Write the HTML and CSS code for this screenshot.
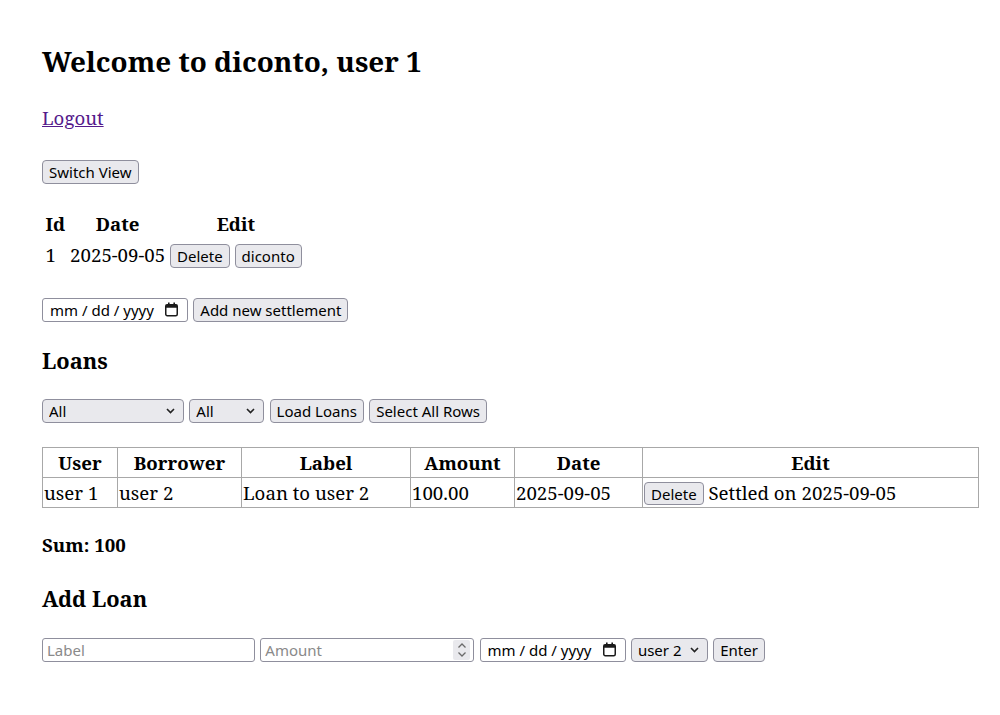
FILE: index.html
```html
<!DOCTYPE html>
<html>
<head>
<meta charset="utf-8">
<title>diconto</title>
<link rel="stylesheet" href="styles.css">
</head>
<body>
<div class="app">
  <h2 class="title">Welcome to diconto, user 1</h2>
  <p class="logout-line"><a href="#" class="logout">Logout</a></p>
  <div class="row switch-row"><button class="btn">Switch View</button></div>
  <table class="settlements">
    <thead><tr><th>Id</th><th>Date</th><th>Edit</th></tr></thead>
    <tbody><tr><td>1</td><td>2025-09-05</td><td><button class="btn">Delete</button> <button class="btn">diconto</button></td></tr></tbody>
  </table>
  <div class="row date-row">
    <span class="date-field"><span class="date-text">mm / dd / yyyy</span><svg class="cal" width="15" height="15" viewBox="0 0 15 15"><rect x="1.75" y="2.75" width="11.5" height="11" rx="1.5" fill="none" stroke="#1b1b1b" stroke-width="1.5"/><rect x="1.75" y="2.75" width="11.5" height="3" fill="#1b1b1b"/><rect x="4" y="0.5" width="1.6" height="3" fill="#1b1b1b"/><rect x="9.4" y="0.5" width="1.6" height="3" fill="#1b1b1b"/></svg></span>
    <button class="btn">Add new settlement</button>
  </div>
  <h3 class="section loans-title">Loans</h3>
  <div class="row filter-row">
    <select class="sel sel-wide"><option>All</option></select>
    <select class="sel sel-narrow"><option>All</option></select>
    <button class="btn">Load Loans</button>
    <button class="btn">Select All Rows</button>
  </div>
  <table class="loans">
    <colgroup><col class="c-user"><col class="c-borrower"><col class="c-label"><col class="c-amount"><col class="c-date"><col class="c-edit"></colgroup>
    <thead><tr><th>User</th><th>Borrower</th><th>Label</th><th>Amount</th><th>Date</th><th>Edit</th></tr></thead>
    <tbody><tr><td>user 1</td><td>user 2</td><td>Loan to user 2</td><td>100.00</td><td>2025-09-05</td><td><button class="btn btn-small">Delete</button> Settled on 2025-09-05</td></tr></tbody>
  </table>
  <h4 class="sum">Sum: 100</h4>
  <h3 class="section add-title">Add Loan</h3>
  <div class="row add-row">
    <input class="field field-label" type="text" placeholder="Label">
    <span class="num-field"><input class="num-input" type="number" placeholder="Amount"><span class="spin"><svg width="10" height="16" viewBox="0 0 10 16"><path d="M1.5 5.5 L5 2 L8.5 5.5" fill="none" stroke="#6a6a6a" stroke-width="1.3"/><path d="M1.5 10.5 L5 14 L8.5 10.5" fill="none" stroke="#6a6a6a" stroke-width="1.3"/></svg></span></span>
    <span class="date-field"><span class="date-text">mm / dd / yyyy</span><svg class="cal" width="15" height="15" viewBox="0 0 15 15"><rect x="1.75" y="2.75" width="11.5" height="11" rx="1.5" fill="none" stroke="#1b1b1b" stroke-width="1.5"/><rect x="1.75" y="2.75" width="11.5" height="3" fill="#1b1b1b"/><rect x="4" y="0.5" width="1.6" height="3" fill="#1b1b1b"/><rect x="9.4" y="0.5" width="1.6" height="3" fill="#1b1b1b"/></svg></span>
    <select class="sel sel-user"><option>user 2</option></select>
    <button class="btn">Enter</button>
  </div>
</div>
</body>
</html>
```
FILE: styles.css
```css
body {
  margin: 0;
  font-family: "Noto Serif", "DejaVu Serif", serif;
  font-size: 18.67px;
  line-height: 26px;
  color: #000;
  background: #fff;
}
.app {
  padding: 0 22px 20px 42px;
}
.title {
  margin: 45.2px 0 0;
  font-size: 27.9px;
  line-height: 32px;
  font-weight: bold;
}
.logout-line {
  margin: 28px 0 0;
}
.logout {
  color: #551a8b;
}
.row {
  display: flex;
  align-items: center;
  gap: 5.3px;
  height: 24px;
}
.switch-row { margin-top: 28.75px; }
.settlements {
  margin-top: 24.25px;
  border-spacing: 2px;
}
.settlements th,
.settlements td {
  padding: 1px 1.5px;
  line-height: 26px;
}
.settlements td { padding-top: 2px; }
.date-row { margin-top: 26.6px; }
.section {
  margin: 0;
  font-size: 21.8px;
  line-height: 26px;
  font-weight: bold;
}
.loans-title { margin-top: 26.2px; }
.filter-row { margin-top: 24.8px; }
.loans {
  margin-top: 24.7px;
  width: 100%;
  table-layout: fixed;
  border-collapse: collapse;
}
.loans th,
.loans td {
  border: 1px solid #a8a8a8;
  padding: 2px 1px 1px;
  line-height: 26px;
  white-space: nowrap;
}
.loans th { text-align: center; }
.loans td { text-align: left; }
.c-user { width: 75px; }
.c-borrower { width: 124px; }
.c-label { width: 169px; }
.c-amount { width: 104px; }
.c-date { width: 128px; }
.c-edit { width: 336px; }
.sum {
  margin: 24px 0 0;
  font-size: 18.67px;
  line-height: 26px;
}
.add-title { margin-top: 27.2px; }
.add-row { margin-top: 26.3px; }

.btn {
  box-sizing: border-box;
  height: 24px;
  margin: 0;
  padding: 1px 6px;
  font-family: "Noto Sans", sans-serif;
  font-size: 15px;
  line-height: 20px;
  color: #000;
  background: #e9e9ed;
  border: 1px solid #8f8f9d;
  border-radius: 4px;
}
.btn-small { height: 23px; }
.sel {
  -webkit-appearance: none;
  appearance: none;
  box-sizing: border-box;
  height: 24px;
  margin: 0;
  padding: 0 20px 0 6px;
  font-family: "Noto Sans", sans-serif;
  font-size: 15px;
  color: #000;
  background-color: #e9e9ed;
  background-image: url("data:image/svg+xml,%3Csvg xmlns='http://www.w3.org/2000/svg' width='9' height='6' viewBox='0 0 9 6'%3E%3Cpath d='M1 1 L4.5 4.5 L8 1' fill='none' stroke='%23222' stroke-width='1.6'/%3E%3C/svg%3E");
  background-repeat: no-repeat;
  background-position: right 8px center;
  border: 1px solid #8f8f9d;
  border-radius: 4px;
}
.sel-wide { width: 142px; }
.sel-narrow { width: 75px; }
.sel-user { width: 77px; }
.field {
  box-sizing: border-box;
  height: 24px;
  margin: 0;
  padding: 0 4px;
  font-family: "Noto Sans", sans-serif;
  font-size: 15px;
  border: 1px solid #8f8f9d;
  border-radius: 3px;
  background: #fff;
}
.field::placeholder,
.num-input::placeholder {
  color: #8a8a8a;
}
.field-label { width: 213px; }
.num-field {
  box-sizing: border-box;
  display: flex;
  align-items: center;
  width: 214px;
  height: 24px;
  padding: 0 3px 0 4px;
  border: 1px solid #8f8f9d;
  border-radius: 3px;
  background: #fff;
}
.num-input {
  flex: 1;
  min-width: 0;
  border: 0;
  padding: 0;
  margin: 0;
  outline: none;
  font-family: "Noto Sans", sans-serif;
  font-size: 15px;
  background: transparent;
  -moz-appearance: textfield;
  appearance: textfield;
}
.num-input::-webkit-inner-spin-button,
.num-input::-webkit-outer-spin-button {
  -webkit-appearance: none;
  margin: 0;
}
.spin {
  display: flex;
  align-items: center;
  justify-content: center;
  width: 17px;
  height: 20px;
  background: #e9e9ed;
  border-radius: 2px;
}
.date-field {
  box-sizing: border-box;
  display: flex;
  align-items: center;
  justify-content: space-between;
  width: 146px;
  height: 24px;
  padding: 0 8px 0 7px;
  font-family: "Noto Sans", sans-serif;
  font-size: 15px;
  color: #000;
  border: 1px solid #8f8f9d;
  border-radius: 3px;
  background: #fff;
}
.date-text { white-space: pre; }
.cal { display: block; }
```
